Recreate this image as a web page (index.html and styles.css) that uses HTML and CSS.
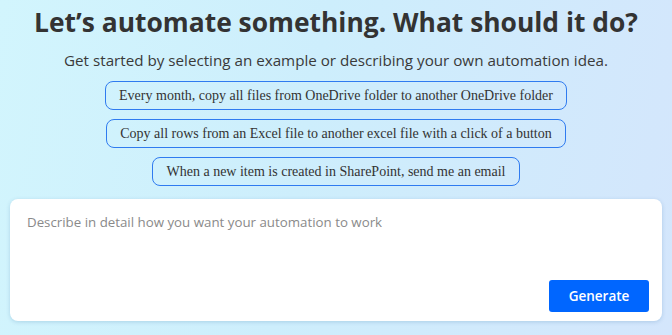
FILE: index.html
```html
<!DOCTYPE html>
<html lang="en">
<head>
<meta charset="utf-8">
<link rel="stylesheet" href="styles.css">
</head>
<body>
<main class="page">
  <h1 class="title">Let’s automate something. What should it do?</h1>
  <p class="subtitle">Get started by selecting an example or describing your own automation idea.</p>
  <div class="examples">
    <button class="example">Every month, copy all files from OneDrive folder to another OneDrive folder</button>
    <button class="example">Copy all rows from an Excel file to another excel file with a click of a button</button>
    <button class="example">When a new item is created in SharePoint, send me an email</button>
  </div>
  <div class="card">
    <textarea class="prompt" placeholder="Describe in detail how you want your automation to work"></textarea>
    <div class="actions">
      <button class="generate">Generate</button>
    </div>
  </div>
</main>
</body>
</html>
```

FILE: styles.css
```css
html, body {
  margin: 0;
  height: 100%;
}
body {
  background: linear-gradient(100deg, #d2f5fd 0%, #cdeefc 45%, #d4e6fc 100%);
  font-family: "Open Sans", "Noto Sans", sans-serif;
  color: #333;
}
.page {
  display: flex;
  flex-direction: column;
  align-items: center;
  padding: 6px 10px 0;
}
.title {
  margin: 0;
  font-size: 26.4px;
  line-height: 32px;
  font-weight: 700;
  color: #333;
  white-space: nowrap;
}
.subtitle {
  margin: 11px 0 0;
  font-size: 15.2px;
  line-height: 22px;
  color: #3a3a3a;
}
.examples {
  display: flex;
  flex-direction: column;
  align-items: center;
  gap: 9px;
  margin-top: 10px;
}
.example {
  font-family: "Liberation Serif", serif;
  font-size: 14px;
  line-height: 17px;
  color: #333;
  background: transparent;
  border: 1px solid #2f7bf0;
  border-radius: 8px;
  padding: 5px 13px;
  height: 29px;
}
.card {
  align-self: stretch;
  margin-top: 13px;
  background: #fff;
  border-radius: 8px;
  box-shadow: 0 1px 4px rgba(0, 80, 140, 0.18);
  height: 122px;
  display: flex;
  flex-direction: column;
  padding: 13px 13px 9px 17px;
  box-sizing: border-box;
}
.prompt {
  flex: 1;
  border: none;
  outline: none;
  resize: none;
  padding: 0;
  font-family: "Open Sans", "Noto Sans", sans-serif;
  font-size: 13.3px;
  line-height: 20px;
  color: #333;
}
.prompt::placeholder {
  color: #8a8a8a;
}
.actions {
  display: flex;
  justify-content: flex-end;
}
.generate {
  width: 100px;
  height: 32px;
  background: #0066ff;
  color: #fff;
  border: none;
  border-radius: 3px;
  font-family: "Open Sans", "Noto Sans", sans-serif;
  font-size: 13.5px;
  font-weight: 600;
}
```
